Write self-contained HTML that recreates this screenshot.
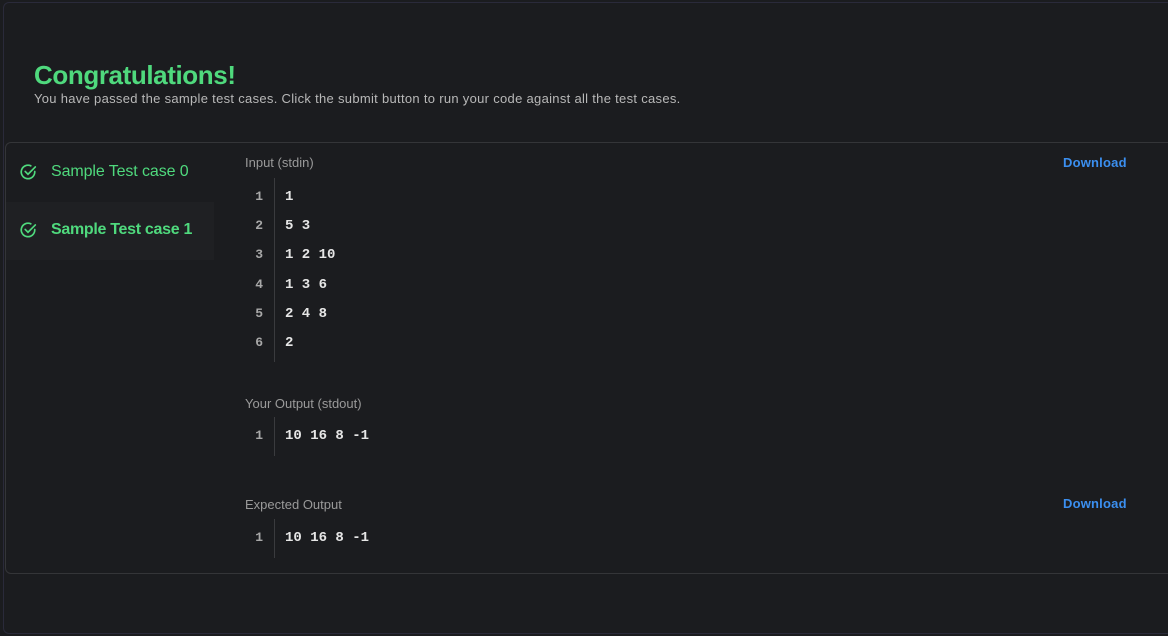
<!DOCTYPE html>
<html><head><style>
*{margin:0;padding:0;box-sizing:border-box}
body{width:1168px;height:636px;background:#1b1c1f;font-family:"Liberation Sans",sans-serif;position:relative;overflow:hidden}
.outer{position:absolute;left:3px;top:2px;width:1170px;height:632px;border:1px solid #2a2a3a;border-radius:6px}
.a{position:absolute;white-space:nowrap}
h1{position:absolute;left:34px;top:60px;color:#4fd97d;font-size:26px;font-weight:bold;letter-spacing:-0.4px}
.sub{left:34px;top:91px;color:#b8b8b8;font-size:13px;letter-spacing:0.3px}
.panel{position:absolute;left:5px;top:142px;width:1170px;height:432px;border:1px solid #343538;border-radius:6px}
.act{position:absolute;left:6px;top:202px;width:208px;height:58px;background:#1f2023}
.tab{color:#4fd97d;font-size:16px;letter-spacing:-0.1px}
.lab{color:#9a9a9a;font-size:13px}
.dl{color:#3b8ff0;font-size:13px;font-weight:bold;letter-spacing:0.2px}
.ln{color:#a8a8a8;font-family:"Liberation Mono",monospace;font-size:13px;font-weight:bold;width:20px;text-align:right}
.cd{color:#e6e6e6;font-family:"Liberation Mono",monospace;font-size:14px;font-weight:bold}
.bar{position:absolute;left:274px;width:1px;background:#3a3b3e}
</style></head><body>
<div class="outer"></div>
<h1>Congratulations!</h1>
<div class="a sub">You have passed the sample test cases. Click the submit button to run your code against all the test cases.</div>
<div class="panel"></div>
<div class="act"></div>
<svg class="a" style="left:19px;top:163px" width="18" height="18" viewBox="0 0 16 16" fill="none" stroke="#4fd97d" stroke-width="1.5" stroke-linecap="round"><path d="M14 7.5V8A6 6 0 1 1 10.5 2.5"/><path d="M5.5 7.5L8 10L14.5 3.5"/></svg>
<div class="a tab" style="left:51px;top:163px">Sample Test case 0</div>
<svg class="a" style="left:19px;top:221px" width="18" height="18" viewBox="0 0 16 16" fill="none" stroke="#4fd97d" stroke-width="1.5" stroke-linecap="round"><path d="M14 7.5V8A6 6 0 1 1 10.5 2.5"/><path d="M5.5 7.5L8 10L14.5 3.5"/></svg>
<div class="a tab" style="left:51px;top:221px;font-weight:bold;letter-spacing:-0.3px">Sample Test case 1</div>

<div class="a lab" style="left:245px;top:155px">Input (stdin)</div>
<div class="a dl" style="left:1063px;top:155px">Download</div>
<div class="bar" style="top:178px;height:184px"></div>
<div class="a ln" style="left:243px;top:189px">1</div><div class="a cd" style="left:285px;top:189px">1</div>
<div class="a ln" style="left:243px;top:218px">2</div><div class="a cd" style="left:285px;top:218px">5 3</div>
<div class="a ln" style="left:243px;top:247px">3</div><div class="a cd" style="left:285px;top:247px">1 2 10</div>
<div class="a ln" style="left:243px;top:277px">4</div><div class="a cd" style="left:285px;top:277px">1 3 6</div>
<div class="a ln" style="left:243px;top:306px">5</div><div class="a cd" style="left:285px;top:306px">2 4 8</div>
<div class="a ln" style="left:243px;top:335px">6</div><div class="a cd" style="left:285px;top:335px">2</div>

<div class="a lab" style="left:245px;top:396px">Your Output (stdout)</div>
<div class="bar" style="top:417px;height:39px"></div>
<div class="a ln" style="left:243px;top:428px">1</div><div class="a cd" style="left:285px;top:428px">10 16 8 -1</div>

<div class="a lab" style="left:245px;top:497px">Expected Output</div>
<div class="a dl" style="left:1063px;top:496px">Download</div>
<div class="bar" style="top:519px;height:39px"></div>
<div class="a ln" style="left:243px;top:530px">1</div><div class="a cd" style="left:285px;top:530px">10 16 8 -1</div>
</body></html>
